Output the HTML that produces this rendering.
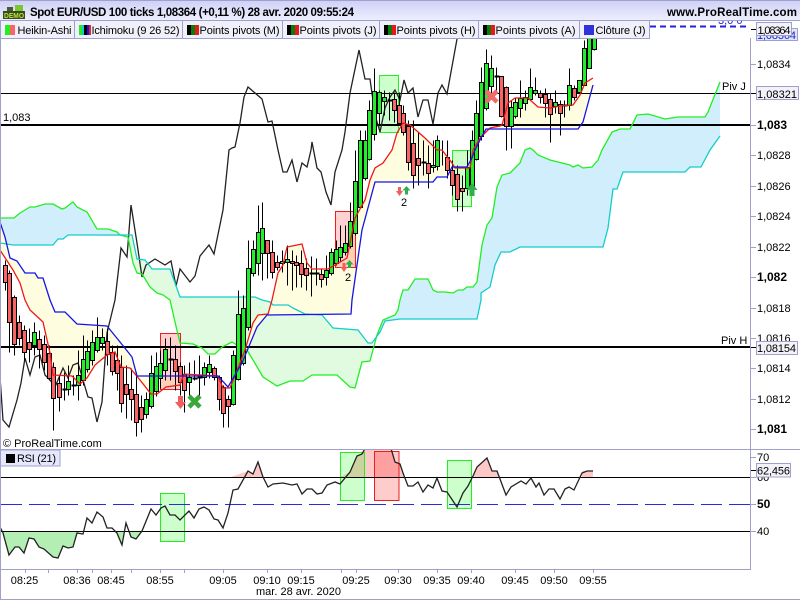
<!DOCTYPE html>
<html><head><meta charset="utf-8"><style>
html,body{margin:0;padding:0;background:#fff}
svg{display:block}
text{font-family:"Liberation Sans",Arial,sans-serif;font-size:11px;fill:#000}
.b{font-weight:bold;font-size:12px}
.t{font-weight:bold;font-size:11.5px}
</style></head><body>
<svg width="800" height="600" viewBox="0 0 800 600" xmlns="http://www.w3.org/2000/svg">
<defs>
<linearGradient id="hd" x1="0" y1="0" x2="0" y2="1"><stop offset="0" stop-color="#cfcff6"/><stop offset="1" stop-color="#eef0fe"/></linearGradient>
<clipPath id="cm"><rect x="1" y="21" width="749" height="428"/></clipPath>
<clipPath id="cr"><rect x="1" y="450" width="749" height="119"/></clipPath>
<clipPath id="cu"><rect x="1" y="450" width="749" height="27"/></clipPath>
<clipPath id="cd"><rect x="1" y="531" width="749" height="38"/></clipPath>
</defs>
<rect width="800" height="600" fill="#fff"/>

<g clip-path="url(#cm)">
<!-- kumo -->
<path fill="#d1eefc" d="M0 218 14 218 20 213 30 207 35 207 45 204 53 204 62 209 65 208 73 202 77 207 87 212 97 229 108 229 117 232 120 235 128 236 68 235 63 239 58 239 53 245 13 245 0 243Z"/>
<path fill="#e1fbe1" d="M128 236 132 235 137 259 145 260 152 269 170 269 180 297 255 297 262 300 270 302 273 305 288 305 293 308 305 314 322 315 333 328 358 330 368 343 373 342 370 361 362 362 355 388 350 387 337 375 312 375 303 381 290 381 277 386 263 377 253 360 247 350 237 345 232 342 222 347 215 354 208 354 202 348 193 344 180 343 175 322 170 300 163 295 157 293 150 287 142 274 137 273 133 263Z"/>
<path fill="#d1eefc" d="M373 342 377 335 383 320 395 315 398 310 400 300 403 290 408 290 415 279 428 279 433 290 437 292 445 292 453 293 458 290 463 290 467 287 473 287 477 282 482 245 487 225 492 218 497 187 502 175 510 173 520 163 525 150 530 148 533 150 538 155 550 160 558 162 570 165 573 167 578 165 583 168 592 167 598 160 602 150 612 132 620 129 630 129 637 115 648 114 665 119 678 117 705 117 708 112 720 82 720 136 710 150 701 167 690 167 685 172 623 172 617 189 613 189 608 228 603 247 520 247 510 252 501 252 495 265 490 287 481 293 481 300 477 319 400 319 385 321 380 332Z"/>
<!-- yellow tenkan/kijun -->
<path fill="#fffde0" fill-rule="evenodd" d="M0 250 13 270 20 283 25 300 30 310 43 322 50 353 53 375 72 376 80 384 87 378 95 365 107 355 115 352 121 367 130 368 140 380 151 394 157 394 166 387 180 385 184 374 218 376 223 388 230 388 238 368 245 350 253 323 258 315 268 314 272 300 278 273 283 265 287 247 302 244 307 263 312 269 328 269 335 265 347 258 355 218 365 200 370 180 375 168 383 163 392 150 397 133 403 123 410 125 425 138 437 150 442 150 452 163 455 168 470 168 473 150 480 138 490 128 500 126 502 125 508 103 515 98 528 98 538 107 550 108 560 106 573 105 580 95 585 83 593 78 593 85 583 122 578 129 486 129 482 136 475 150 472 158 467 167 452 167 447 177 437 177 433 182 375 182 362 230 352 300 351 314 267 315 257 327 242 363 228 387 218 376 137 376 132 357 120 342 107 326 77 324 65 312 55 312 50 300 43 278 38 278 35 273 25 273 17 261 10 258 5 237 0 222Z"/>

<!-- boxes main -->
<rect x="379.500" y="75.500" width="19" height="57" fill="#00ff00" fill-opacity=".2" stroke="#22ee22"/>
<rect x="335.500" y="211.500" width="20" height="56" fill="#ff0000" fill-opacity=".18" stroke="#e82020"/>
<rect x="160.500" y="333.500" width="20" height="56" fill="#ff0000" fill-opacity=".18" stroke="#e82020"/>
<rect x="452.500" y="150.500" width="19" height="56" fill="#00ff00" fill-opacity=".2" stroke="#22ee22"/>

<!-- horizontal lines -->
<path d="M1 93.500H750" stroke="#000" fill="none"/>
<path d="M1 125H750M1 347H750" stroke="#000" stroke-width="2" fill="none"/>

<!-- chikou -->
<polyline fill="none" stroke="#222" stroke-width="1.3" points="0,377 3,420 9,427 17,400 21,383 25,358 30,375 35,357 40,355 45,375 50,380 55,387 63,368 68,378 73,365 78,363 83,380 88,397 92,398 97,422 102,402 107,333 115,300 121,248 127,257 131,205 137,243 142,277 146,265 155,259 165,265 171,261 176,286 180,269 190,282 195,276 200,256 209,245 214,254 223,210 229,150 232,148 235,147 240,123 244,97 248,87 262,99 268,122 272,121 278,150 283,172 287,172 292,160 297,182 302,163 307,167 311,150 312,142 317,168 321,172 326,192 331,205 335,172 342,150 345,132 350,93 359,50 365,79 370,79 375,115 380,132 385,108 390,97 395,90 400,100 404,80 408,93 413,88 418,117 423,100 428,100 433,124 438,93 442,85 447,94 457,39 460,30"/>

<!-- span lines -->
<polyline fill="none" stroke="#22ee22" stroke-width="1.3" points="0,218 14,218 20,213 30,207 35,207 45,204 53,204 62,209 65,208 73,202 77,207 87,212 97,229 108,229 117,232 120,235 128,237 133,263 137,273 142,274 150,287 157,293 163,295 170,300 175,322 180,343 193,344 202,348 208,354 215,354 222,347 232,342 237,345 247,350 253,360 263,377 277,386 290,381 303,381 312,375 337,375 350,387 355,388 362,362 370,361 377,335 383,320 395,315 398,310 400,300 403,290 408,290 415,279 428,279 433,290 437,292 445,292 453,293 458,290 463,290 467,287 473,287 477,282 482,245 487,225 492,218 497,187 502,175 510,173 520,163 525,150 530,148 533,150 538,155 550,160 558,162 570,165 573,167 578,165 583,168 592,167 598,160 602,150 612,132 620,129 630,129 637,115 648,114 665,119 678,117 705,117 708,112 720,82"/>
<polyline fill="none" stroke="#14cccc" stroke-width="1.3" points="0,243 13,245 53,245 58,239 63,239 68,235 132,235 137,259 145,260 152,269 170,269 180,297 255,297 262,300 270,302 273,305 288,305 293,308 305,314 322,315 333,328 358,330 368,343 372,343 380,332 385,321 400,319 477,319 481,300 481,293 490,287 495,265 501,252 510,252 520,247 603,247 608,228 613,189 617,189 623,172 685,172 690,167 701,167 710,150 720,136"/>

<!-- candles -->
<g transform="translate(.5,.5)">
<path fill="none" stroke="#000" d="M5 260V290M9 270V352M14 295V355M19 315V345M24 325V360M29 328V362M34 322V355M39 330V368M44 335V370M49 345V380M53 362V430M59 375V411M64 372V400M68 365V395M73 375V395M78 350V400M83 335V385M87 340V372M92 330V365M97 317V352M102 328V350M107 328V365M112 345V375M117 345V390M121 355V412M126 365V418M131 368V420M136 372V436M141 395V432M146 392V418M151 355V408M156 352V396M160 350V388M165 338V380M170 337V380M175 345V390M180 362V395M184 365V412M189 362V395M194 360V380M199 355V395M204 362V385M209 355V378M214 366V380M219 375V410M223 385V427M228 395V427M233 350V405M238 290V380M243 295V365M248 240V330M253 240V276M258 205V275M262 202V280M267 240V278M272 240V278M277 255V270M282 250V272M287 245V285M292 250V290M296 255V287M301 250V287M306 258V290M311 256V296M316 258V285M321 268V287M326 255V285M331 248V275M336 240V265M340 225V262M345 225V255M350 202V248M355 150V235M360 130V208M365 130V180M369 100V160M374 68V140M379 90V125M384 90V115M389 92V120M394 92V122M399 92V125M403 105V135M408 120V170M413 120V188M418 132V185M423 140V175M428 145V188M433 140V172M437 135V170M442 140V165M447 140V178M452 160V195M457 165V211M462 175V211M467 150V195M472 130V190M476 100V160M481 67V140M486 49V110M491 55V97M496 67V90M501 76V117M506 86V150M511 100V148M515 97V118M520 80V117M525 90V110M530 68V100M535 77V95M540 90V103M545 88V117M550 93V142M555 90V113M560 100V135M564 100V117M569 68V110M574 85V100M579 80V93M584 40V85M589 38V68M594 38V50"/>
<path fill="none" stroke="#000" stroke-width="2" d="M62 389h5M71 385h5M168 359h5M192 378h5M197 377h5M309 273h5M314 273h5M387 100h5M421 162h5M494 76h5M562 105h5"/>
<path fill="#22ee2a" stroke="#000" d="M32 332h4V345h-4zM66 381h4V389h-4zM76 375h4V385h-4zM81 359h4V380h-4zM85 351h4V369h-4zM90 342h4V360h-4zM95 337h4V350h-4zM100 337h4V343h-4zM144 399h4V414h-4zM149 373h4V406h-4zM154 366h4V391h-4zM158 363h4V378h-4zM163 349h4V370h-4zM187 377h4V382h-4zM202 367h4V377h-4zM207 364h4V372h-4zM231 355h4V404h-4zM236 314h4V379h-4zM241 308h4V363h-4zM246 268h4V327h-4zM251 249h4V273h-4zM256 232h4V263h-4zM260 228h4V253h-4zM280 261h4V263h-4zM285 259h4V262h-4zM324 270h4V277h-4zM329 252h4V273h-4zM334 249h4V263h-4zM338 247h4V257h-4zM343 243h4V252h-4zM348 221h4V246h-4zM353 181h4V233h-4zM358 140h4V207h-4zM363 140h4V178h-4zM367 110h4V159h-4zM372 91h4V134h-4zM377 92h4V113h-4zM382 97h4V101h-4zM431 165h4V167h-4zM435 140h4V166h-4zM465 167h4V188h-4zM470 140h4V188h-4zM474 113h4V159h-4zM479 82h4V136h-4zM484 63h4V108h-4zM489 68h4V86h-4zM509 107h4V126h-4zM513 102h4V116h-4zM518 98h4V108h-4zM523 97h4V103h-4zM528 87h4V99h-4zM533 90h4V93h-4zM553 102h4V106h-4zM567 85h4V105h-4zM577 80h4V92h-4zM582 48h4V85h-4zM587 30h4V68h-4zM592 30h4V49h-4z"/>
<path fill="#fb6464" stroke="#000" d="M3 265h4V282h-4zM7 273h4V322h-4zM12 297h4V344h-4zM17 322h4V338h-4zM22 330h4V352h-4zM27 342h4V349h-4zM37 339h4V349h-4zM42 344h4V362h-4zM47 353h4V378h-4zM51 367h4V398h-4zM57 383h4V397h-4zM105 341h4V354h-4zM110 352h4V371h-4zM115 360h4V373h-4zM119 367h4V403h-4zM124 384h4V394h-4zM129 389h4V399h-4zM134 394h4V422h-4zM139 407h4V419h-4zM173 359h4V371h-4zM178 366h4V382h-4zM182 374h4V390h-4zM212 368h4V377h-4zM217 377h4V399h-4zM221 387h4V413h-4zM226 399h4V406h-4zM265 240h4V253h-4zM270 252h4V272h-4zM275 262h4V267h-4zM290 261h4V263h-4zM294 262h4V265h-4zM299 263h4V274h-4zM304 268h4V275h-4zM319 274h4V279h-4zM392 99h4V110h-4zM397 105h4V123h-4zM401 113h4V132h-4zM406 126h4V162h-4zM411 143h4V175h-4zM416 158h4V165h-4zM426 163h4V173h-4zM445 157h4V170h-4zM450 170h4V185h-4zM455 174h4V199h-4zM460 188h4V191h-4zM499 76h4V116h-4zM504 87h4V126h-4zM538 93h4V97h-4zM543 94h4V103h-4zM548 99h4V114h-4zM558 104h4V113h-4zM572 88h4V97h-4z"/>
</g>

<!-- tenkan / kijun lines -->
<polyline fill="none" stroke="#f01818" stroke-width="1.3" points="0,250 13,270 20,283 25,300 30,310 43,322 50,353 53,375 72,376 80,384 87,378 95,365 107,355 115,352 121,367 130,368 140,380 151,394 157,394 166,387 180,385 184,374 218,376 223,388 230,388 238,368 245,350 253,323 258,315 268,314 272,300 278,273 283,265 287,247 302,244 307,263 312,269 328,269 335,265 347,258 355,218 365,200 370,180 375,168 383,163 392,150 397,133 403,123 410,125 425,138 437,150 442,150 452,163 455,168 470,168 473,150 480,138 490,128 500,126 502,125 508,103 515,98 528,98 538,107 550,108 560,106 573,105 580,95 585,83 593,78"/>
<polyline fill="none" stroke="#1414e8" stroke-width="1.3" points="0,222 5,237 10,258 17,261 25,273 35,273 38,278 43,278 50,300 55,312 65,312 77,324 107,326 120,342 132,357 137,376 218,376 228,387 242,363 257,327 267,315 351,314 352,300 362,230 375,182 433,182 437,177 447,177 452,167 467,167 472,158 475,150 482,136 486,129 578,129 583,122 593,85"/>

<!-- markers -->
<path fill="#ef5f5f" d="M178 396h5v6h3l-5.500 7-5.500-7h3zM342.500 263h3v4h2l-3.500 5-3.500-5h2zM398 187h3v4h2l-3.500 5-3.500-5h2z"/>
<path fill="#2fae4a" d="M349.500 260l4 4.500h-2.500v3.500h-3v-3.500h-2.500zM406.500 186l4 4.500h-2.500v4h-3v-4h-2.500zM472 183l5.500 7h-3v6h-5v-6h-3z"/>
<path stroke="#38a838" stroke-width="4.500" d="M189 396l11 11M200 396l-11 11"/>
<path stroke="#ef6a6a" stroke-width="4.500" d="M486 91l11 11M497 91l-11 11"/>
<text x="345" y="281">2</text>
<text x="401" y="206">2</text>
<text x="3" y="121">1,083</text>
<text x="722" y="90">Piv J</text>
<text x="721" y="344">Piv H</text>
<text x="3" y="447">© ProRealTime.com</text>
<path d="M650 26.500H748" stroke="#2222dd" stroke-width="2" stroke-dasharray="6 4"/>
<text x="718" y="24" style="fill:#2222cc">3,0 0</text>
</g>

<!-- RSI -->
<g clip-path="url(#cr)">
<g clip-path="url(#cu)"><path fill="#ffc8c8" d="M231 477 248 471 253 474 258 462 263 477ZM340 477 350 472 357 456 362 454 367 445 390 445 395 462 400 464 403 473 405 477ZM472 477 477 467 487 458 492 471 497 471 500 477ZM582 477 582 471 587 471 593 471 593 477Z"/></g>
<g clip-path="url(#cd)"><path fill="#b3efb3" d="M0 526 3 533 9 555 15 547 19 547 24 553 29 538 34 539 39 547 44 549 53 557 58 558 63 546 68 548 73 547 78 533 80 531 0 531ZM111 531 116 533 121 545 126 523 131 537 136 539 142 531Z"/></g>
<rect x="160.500" y="493.500" width="24" height="48" fill="#00ff00" fill-opacity=".2" stroke="#22ee22"/>
<rect x="340.500" y="452.500" width="24" height="48" fill="#00ff00" fill-opacity=".2" stroke="#22ee22"/>
<rect x="374.500" y="451.500" width="24.500" height="49" fill="#ff0000" fill-opacity=".2" stroke="#ee1c1c"/>
<rect x="447.500" y="460.500" width="24" height="48" fill="#00ff00" fill-opacity=".2" stroke="#22ee22"/>
<path d="M1 477.500H750M1 531.500H750" stroke="#000"/>
<path d="M1 504.500H750" stroke="#2a2ae0" stroke-dasharray="21 7"/>
<polyline fill="none" stroke="#222" stroke-width="1.3" points="0,527 3,533 9,555 15,547 19,547 24,553 29,538 34,539 39,547 44,549 53,557 58,558 63,546 68,548 73,547 77,533 83,534 87,518 92,523 97,512 103,517 107,528 112,528 117,533 122,545 126,523 131,537 136,539 142,531 151,509 156,515 161,508 165,506 170,515 175,515 180,520 189,511 194,518 199,509 204,507 209,510 214,519 218,520 223,528 228,513 233,490 238,489 248,471 253,474 258,462 263,477 268,487 273,484 283,483 292,485 297,484 302,494 307,489 312,489 317,494 322,493 327,485 335,482 340,484 350,472 357,456 362,454 367,445 390,445 395,462 400,464 403,473 408,486 413,486 418,482 423,492 428,485 433,488 437,478 442,491 447,492 457,507 463,493 468,486 473,476 477,467 487,458 492,471 497,471 506,495 511,487 521,481 526,484 531,478 536,487 539,483 544,495 549,489 554,489 560,499 565,489 569,487 574,490 582,473 587,471 593,471"/>
</g>

<!-- frame and axes -->
<path d="M.5 0V600M750.500 38V449M750.500 450V569.500H0M0 449.500H800M0 599.500H800" stroke="#a0a0cc" fill="none"/>
<path stroke="#a0a0cc" d="M25.500 570v3M48.500 570v3M77.500 570v3M92.500 570v3M111.500 570v3M131.500 570v3M160.500 570v3M184.500 570v3M223.500 570v3M267.500 570v3M301.500 570v3M341.500 570v3M356.500 570v3M398.500 570v3M437.500 570v3M471.500 570v3M515.500 570v3M554.500 570v3M593.500 570v3"/>
<path stroke="#a0a0cc" d="M751 64.500h5M751 125.500h5M751 155.500h5M751 186.500h5M751 216.500h5M751 247.500h5M751 277.500h5M751 308.500h5M751 338.500h5M751 368.500h5M751 399.500h5M751 429.500h5M751 457.500h5M751 477.500h5M751 504.500h5M751 531.500h5"/>
<path stroke="#000" d="M751 29.500h5M751 93.500h5M751 347.500h5M751 470.500h5"/>

<!-- axis labels -->
<rect x="756.500" y="28.500" width="41" height="12" fill="#dfe6fb" stroke="#a0a0cc"/>
<text x="757" y="39" style="fill:#2222cc" textLength="39">1,08364</text>
<text x="757" y="68">1,0834</text>
<text x="757" y="159">1,0828</text>
<text x="757" y="190">1,0826</text>
<text x="757" y="220">1,0824</text>
<text x="757" y="251">1,0822</text>
<text x="757" y="312">1,0818</text>
<text x="757" y="342">1,0816</text>
<text x="757" y="372">1,0814</text>
<text x="757" y="403">1,0812</text>
<text x="757" y="129" class="b">1,083</text>
<text x="757" y="281" class="b">1,082</text>
<text x="757" y="433" class="b">1,081</text>
<rect x="756.500" y="22.500" width="35" height="13" fill="#f2f2f8" stroke="#a0a0cc"/>
<text x="757.500" y="34" textLength="33">1,08364</text>
<rect x="756.500" y="86.500" width="42" height="13" fill="#f2f2f8" stroke="#a0a0cc"/>
<text x="757" y="98" textLength="40">1,08321</text>
<rect x="756.500" y="341.500" width="41" height="13" fill="#f2f2f8" stroke="#a0a0cc"/>
<text x="757" y="352" textLength="39">1,08154</text>

<text x="757" y="461">70</text>
<text x="757" y="481">60</text>
<text x="757" y="508" class="b">50</text>
<text x="757" y="535">40</text>
<rect x="756.500" y="463.500" width="34" height="13.500" fill="#f2f2f8" stroke="#a0a0cc"/>
<text x="757" y="474.500" textLength="33">62,456</text>

<!-- time axis -->
<g text-anchor="middle">
<text x="24.500" y="584">08:25</text><text x="77" y="584">08:36</text><text x="111" y="584">08:45</text><text x="160" y="584">08:55</text><text x="223" y="584">09:05</text><text x="267" y="584">09:10</text><text x="301" y="584">09:15</text><text x="356" y="584">09:25</text><text x="398" y="584">09:30</text><text x="437" y="584">09:35</text><text x="471" y="584">09:40</text><text x="515" y="584">09:45</text><text x="554" y="584">09:50</text><text x="593" y="584">09:55</text>
<text x="298.500" y="595" textLength="85">mar. 28 avr. 2020</text>
</g>

<!-- RSI label -->
<rect x=".5" y="450" width="59.500" height="16" fill="#e6e6fc" stroke="#a0a0cc"/>
<rect x="6" y="454" width="9" height="9" fill="#000"/>
<text x="17" y="462" textLength="39">RSI (21)</text>

<!-- header -->
<rect x="0" y="0" width="800" height="21" fill="url(#hd)"/>
<path d="M0 .5H800M0 20.500H800" stroke="#a0a0cc"/>
<rect x="3" y="11" width="22" height="8" fill="#3a4a22"/>
<rect x="7" y="7" width="6" height="4" fill="#4a5a2a"/>
<rect x="15" y="5" width="8" height="6" fill="#78c832"/>
<text x="4" y="18" style="font-size:7.500px;font-weight:bold;fill:#b8e838" textLength="20" lengthAdjust="spacingAndGlyphs">DEMO</text>
<text x="30" y="16" class="t" textLength="324">Spot EUR/USD 100 ticks 1,08364 (+0,11 %) 28 avr. 2020 09:55:24</text>
<text x="667" y="16" class="t" textLength="130">www.ProRealTime.com</text>

<!-- tabs -->
<rect x="1" y="21" width="648" height="17" fill="#f0f0fa"/>
<path d="M.5 38.500H649.500V21M74.500 21V38M182.500 21V38M282.500 21V38M379.500 21V38M478.500 21V38M579.500 21V38" stroke="#a0a0cc" fill="none"/>
<rect x="5" y="25" width="5" height="10" fill="#22ee22"/><rect x="10" y="25" width="5" height="10" fill="#fb6464"/>
<rect x="79" y="25" width="3" height="10" fill="#22ee22"/><rect x="82" y="25" width="2" height="10" fill="#14cccc"/><rect x="84" y="25" width="3" height="10" fill="#000"/><rect x="87" y="25" width="2" height="10" fill="#1414e8"/><rect x="89" y="25" width="2" height="10" fill="#f02020"/>
<rect x="187" y="25" width="4" height="10" fill="#000"/><rect x="191" y="25" width="4" height="10" fill="#0a7a0a"/><rect x="195" y="25" width="4" height="10" fill="#e81818"/>
<rect x="287" y="25" width="4" height="10" fill="#000"/><rect x="291" y="25" width="4" height="10" fill="#0a7a0a"/><rect x="295" y="25" width="4" height="10" fill="#e81818"/>
<rect x="384" y="25" width="4" height="10" fill="#000"/><rect x="388" y="25" width="4" height="10" fill="#0a7a0a"/><rect x="392" y="25" width="4" height="10" fill="#e81818"/>
<rect x="483" y="25" width="4" height="10" fill="#000"/><rect x="487" y="25" width="4" height="10" fill="#0a7a0a"/><rect x="491" y="25" width="4" height="10" fill="#e81818"/>
<rect x="584" y="25" width="10" height="10" fill="#3030dd"/>
<text x="17.500" y="34" textLength="54">Heikin-Ashi</text>
<text x="91.500" y="34" textLength="88">Ichimoku (9 26 52)</text>
<text x="199.500" y="34" textLength="80">Points pivots (M)</text>
<text x="299.500" y="34" textLength="77">Points pivots (J)</text>
<text x="396.500" y="34" textLength="79">Points pivots (H)</text>
<text x="495.500" y="34" textLength="80">Points pivots (A)</text>
<text x="595.500" y="34" textLength="50">Clôture (J)</text>
</svg>
</body></html>
